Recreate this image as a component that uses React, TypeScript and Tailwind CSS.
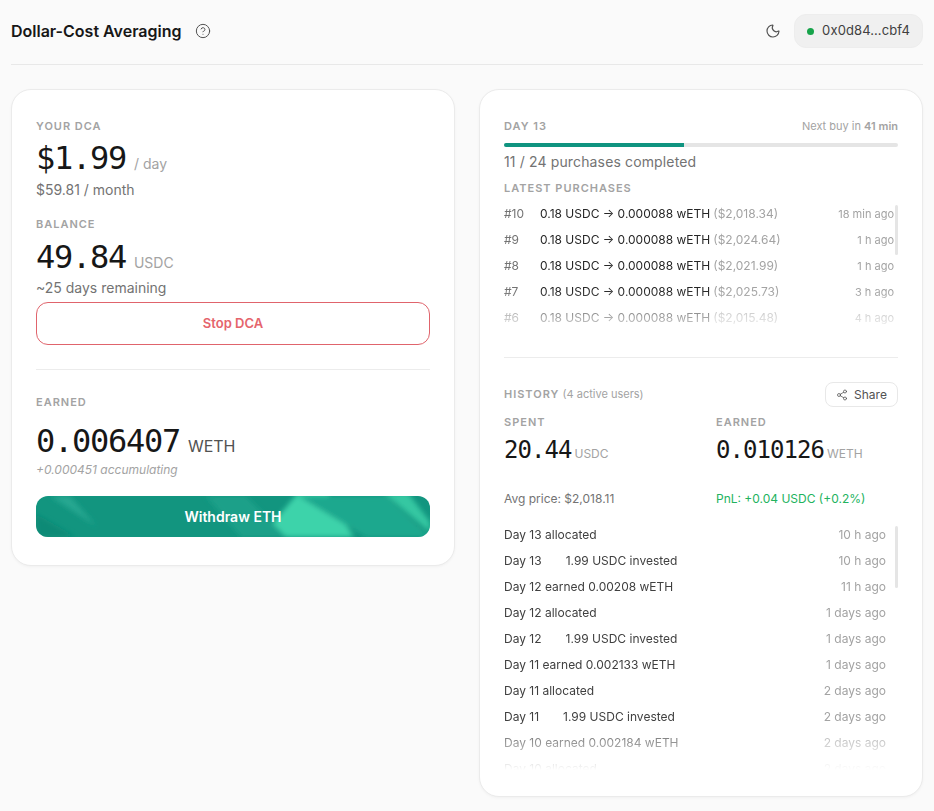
import { CircleHelp, Moon, Share2 } from "lucide-react";

const purchases = [
  { id: "#10", price: "($2,018.34)", ago: "18 min ago" },
  { id: "#9", price: "($2,024.64)", ago: "1 h ago" },
  { id: "#8", price: "($2,021.99)", ago: "1 h ago" },
  { id: "#7", price: "($2,025.73)", ago: "3 h ago" },
  { id: "#6", price: "($2,015.48)", ago: "4 h ago" },
];

const history = [
  { day: "Day 13 allocated", ago: "10 h ago" },
  { day: "Day 13", invested: "1.99 USDC invested", ago: "10 h ago" },
  { day: "Day 12 earned 0.00208 wETH", ago: "11 h ago" },
  { day: "Day 12 allocated", ago: "1 days ago" },
  { day: "Day 12", invested: "1.99 USDC invested", ago: "1 days ago" },
  { day: "Day 11 earned 0.002133 wETH", ago: "1 days ago" },
  { day: "Day 11 allocated", ago: "2 days ago" },
  { day: "Day 11", invested: "1.99 USDC invested", ago: "2 days ago" },
  { day: "Day 10 earned 0.002184 wETH", ago: "2 days ago" },
  { day: "Day 10 allocated", ago: "2 days ago" },
];

const mono = "font-['DejaVu_Sans_Mono',monospace] tracking-[-0.04em] text-[#171717]";

function Label({ children }: { children: React.ReactNode }) {
  return <div className="h-4 text-[11px] leading-4 font-semibold tracking-[0.09em] text-[#a3a3a3] uppercase">{children}</div>;
}

function WithdrawButton() {
  return (
    <button className="relative mt-[18px] flex h-[41px] w-full items-center justify-center overflow-hidden rounded-xl bg-[#12957f] text-sm font-semibold text-white">
      <svg className="absolute inset-0 h-full w-full" viewBox="0 0 394 41" preserveAspectRatio="none">
        <defs>
          <filter id="soft">
            <feGaussianBlur stdDeviation="2.5" />
          </filter>
        </defs>
        <g filter="url(#soft)">
          <path d="M225 41 L262 -3 L292 -3 L300 14 L318 41 Z" fill="#3dd3aa" />
          <path d="M262 0 L350 0 L394 41 L330 41 Z" fill="#1fa88e" />
          <path d="M348 -3 L372 -3 L394 26 L394 36 Z" fill="#35c7a2" />
          <path d="M14 0 L34 0 L60 30 Z" fill="#25a791" />
          <path d="M170 0 L210 0 L250 41 L205 41 Z" fill="#1ba089" />
          <path d="M0 18 L40 41 L0 41 Z" fill="#0f8a76" />
        </g>
      </svg>
      <span className="relative">Withdraw ETH</span>
    </button>
  );
}

export default function App() {
  return (
    <div className="min-h-[811px] bg-[#fafafa] px-[11px] font-['Inter',sans-serif] text-[#171717]">
      <header className="flex h-[65px] items-center justify-between border-b border-[#e8e8e8] pb-[2px]">
        <div className="flex items-center gap-[13px]">
          <h1 className="text-base font-semibold">Dollar-Cost Averaging</h1>
          <CircleHelp size={16} strokeWidth={1.5} className="text-[#525252]" />
        </div>
        <div className="flex items-center gap-[13px]">
          <Moon size={16} strokeWidth={1.75} className="text-[#525252]" />
          <div className="flex h-[34px] items-center gap-2 rounded-xl border border-[#ededed] bg-[#f0f0f0] px-3 text-[13px] tracking-[0.01em] text-[#404040]">
            <span className="h-[7px] w-[7px] rounded-full bg-[#16a34a]" />
            0x0d84…cbf4
          </div>
        </div>
      </header>

      <main className="mt-6 grid grid-cols-2 items-start gap-6">
        <section className="rounded-[20px] border border-[#ebebeb] bg-white px-6 pt-7 pb-7 shadow-[0_1px_3px_rgba(0,0,0,0.04)]">
          <Label>Your DCA</Label>
          <div className="mt-2 flex h-8 items-baseline gap-2">
            <span className={`${mono} text-[32px] leading-8 font-medium`}>$1.99</span>
            <span className="text-sm text-[#a3a3a3]">/ day</span>
          </div>
          <div className="mt-[6px] h-5 text-sm leading-5 text-[#737373]">$59.81 / month</div>

          <div className="mt-4">
            <Label>Balance</Label>
          </div>
          <div className="mt-[9px] flex h-8 items-baseline gap-2">
            <span className={`${mono} text-[32px] leading-8 font-medium`}>49.84</span>
            <span className="text-sm text-[#a3a3a3]">USDC</span>
          </div>
          <div className="mt-[5px] h-5 text-sm leading-5 text-[#737373]">~25 days remaining</div>
          <button className="mt-1 h-[43px] w-full rounded-xl border border-[#e0646c] text-[13px] font-semibold text-[#e5646c]">Stop DCA</button>

          <div className="mt-6 h-px bg-[#ececec]" />

          <div className="mt-6">
            <Label>Earned</Label>
          </div>
          <div className="mt-[15px] flex h-8 items-baseline gap-2">
            <span className={`${mono} text-[32px] leading-8 font-medium`}>0.006407</span>
            <span className="text-base text-[#525252]">WETH</span>
          </div>
          <div className="mt-[5px] h-4 text-xs leading-4 text-[#a3a3a3] italic">+0.000451 accumulating</div>
          <WithdrawButton />
        </section>

        <section className="h-[708px] rounded-[20px] border border-[#ebebeb] bg-white px-6 pt-7 shadow-[0_1px_3px_rgba(0,0,0,0.04)]">
          <div className="flex items-center justify-between">
            <Label>Day 13</Label>
            <div className="text-[11px] leading-4 text-[#a3a3a3]">
              Next buy in <span className="font-semibold">41 min</span>
            </div>
          </div>
          <div className="mt-[9px] h-1 overflow-hidden rounded-full bg-[#e5e5e5]">
            <div className="h-full w-[45.8%] bg-[#0f9480]" />
          </div>
          <div className="mt-[5px] h-5 text-sm leading-5 tracking-[0.01em] text-[#737373]">11 / 24 purchases completed</div>
          <div className="mt-[8px]">
            <Label>Latest purchases</Label>
          </div>

          <div className="relative mt-[5px] h-[124px] overflow-hidden [mask-image:linear-gradient(to_bottom,black_72%,rgba(0,0,0,0.25)_100%)]">
            {purchases.map((p) => (
              <div key={p.id} className="flex h-[26px] items-center pr-[4px] text-xs">
                <span className="w-9 text-[#737373]">{p.id}</span>
                <span className="text-[#262626]">0.18 USDC → 0.000088 wETH</span>
                <span className="ml-[3px] text-[#a3a3a3]">{p.price}</span>
                <span className="ml-auto text-[11px] text-[#a3a3a3]">{p.ago}</span>
              </div>
            ))}
            <div className="absolute top-[4px] right-0 h-[50px] w-[3px] rounded-full bg-[#e5e5e5]" />
          </div>

          <div className="mt-[32px] h-px bg-[#ececec]" />

          <div className="mt-6 flex h-[25px] items-center justify-between">
            <div className="text-[11px] text-[#a3a3a3]">
              <span className="font-semibold tracking-[0.09em]">HISTORY</span> (4 active users)
            </div>
            <button className="flex h-[25px] w-[73px] items-center justify-center gap-[6px] rounded-lg border border-[#e8e8e8] text-xs text-[#525252]">
              <Share2 size={12} strokeWidth={1.5} />
              Share
            </button>
          </div>

          <div className="mt-[7px] grid grid-cols-2 gap-x-[30px]">
            <div>
              <Label>Spent</Label>
              <div className="mt-[8px] flex h-6 items-baseline gap-[3px]">
                <span className={`${mono} text-2xl leading-6 font-medium`}>20.44</span>
                <span className="text-xs text-[#a3a3a3]">USDC</span>
              </div>
              <div className="mt-[29px] text-xs leading-4 text-[#737373]">Avg price: $2,018.11</div>
            </div>
            <div>
              <Label>Earned</Label>
              <div className="mt-[8px] flex h-6 items-baseline gap-[3px]">
                <span className={`${mono} text-2xl leading-6 font-medium`}>0.010126</span>
                <span className="text-xs text-[#a3a3a3]">WETH</span>
              </div>
              <div className="mt-[29px] text-xs leading-4 text-[#22b35e]">PnL: +0.04 USDC (+0.2%)</div>
            </div>
          </div>

          <div className="relative mt-[15px] h-[248px] overflow-hidden [mask-image:linear-gradient(to_bottom,black_80%,transparent_100%)]">
            {history.map((h, i) => (
              <div key={i} className="flex h-[26px] items-center pr-3 text-xs">
                <span className="text-[#404040]">{h.day}</span>
                {h.invested && <span className="ml-6 text-[#404040]">{h.invested}</span>}
                <span className="ml-auto text-[#a3a3a3]">{h.ago}</span>
              </div>
            ))}
            <div className="absolute top-[4px] right-0 h-[62px] w-[3px] rounded-full bg-[#e5e5e5]" />
          </div>
        </section>
      </main>
    </div>
  );
}
